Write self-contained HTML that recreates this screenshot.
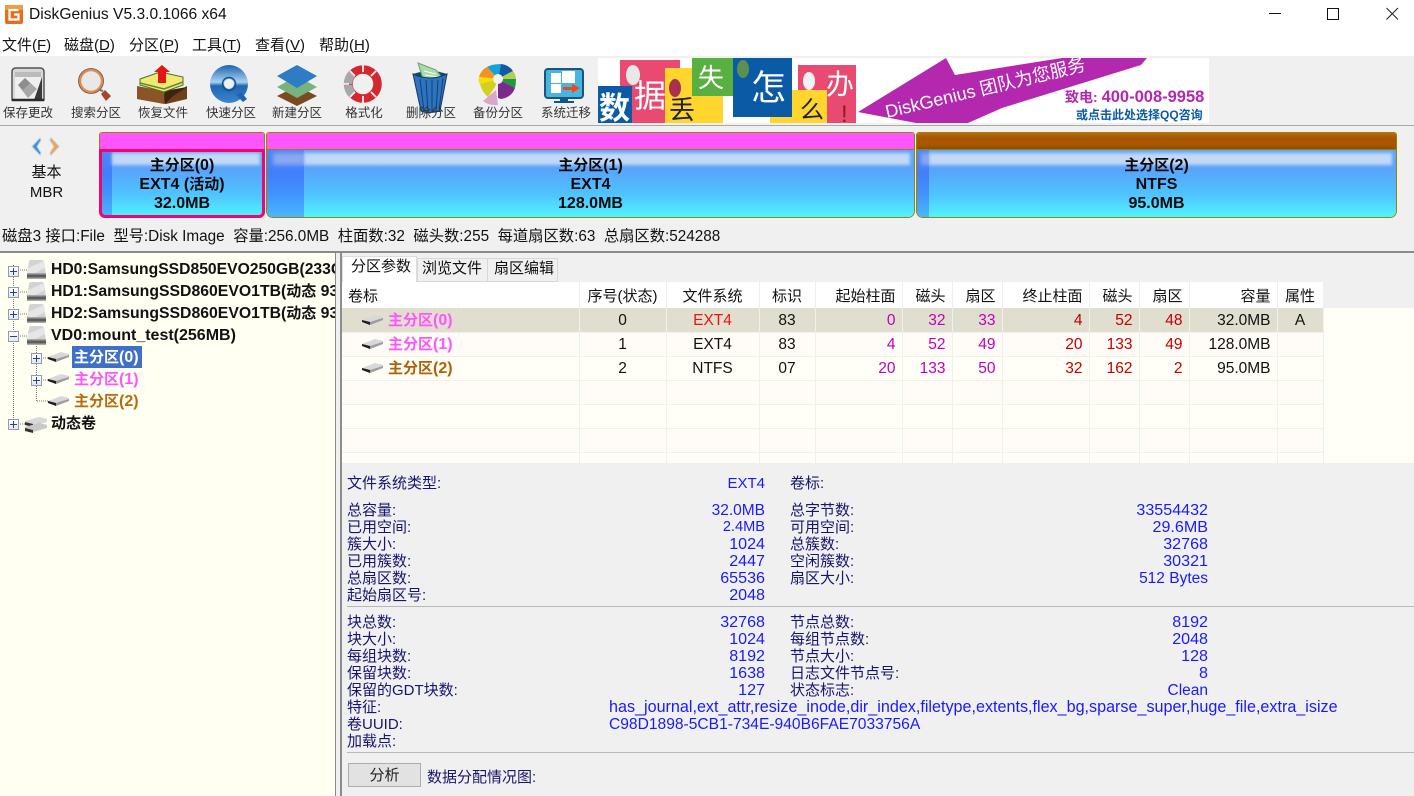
<!DOCTYPE html>
<html lang="zh-CN"><head><meta charset="utf-8"><title>DiskGenius</title>
<style>
html,body{margin:0;padding:0}
body{width:1414px;height:796px;overflow:hidden;position:relative;background:#f0f0f0;font:15px/17px "Liberation Sans","Noto Sans CJK SC",sans-serif;color:#111}
.a,.t,.l,.v,.b{position:absolute}
.t,.l,.v,.b{white-space:nowrap}
svg{position:absolute;overflow:visible}
.z{font-size:15px}
.m{top:37px;font-size:15px}
.m u{text-decoration:underline}
.b{top:105px;width:80px;text-align:center;font-size:12.5px;line-height:16px;color:#333}
.p{position:absolute;top:132px;height:86px;box-sizing:border-box;border:1px solid #9c8200;border-radius:3px 3px 7px 7px;overflow:hidden}
.p .top{position:absolute;left:0;right:0;top:0;height:17px;border-bottom:1px solid #9c8200;box-sizing:border-box}
.p .body{position:absolute;left:0;right:0;top:17px;bottom:0;background:linear-gradient(#5da5fb 0,#58a5fb 30%,#4fc2ff 65%,#50f3ff 100%)}
.p .strip{position:absolute;left:0;top:0;bottom:0;background:linear-gradient(#4d86f8 0,#417ffb 35%,#4192fd 65%,#47b7ff 100%)}
.p .band{position:absolute;right:4px;top:3px;height:12px;background:#c3d8f6;filter:blur(1.5px)}
.p .sband{position:absolute;top:3px;height:12px;background:#8aa8ee;filter:blur(2px)}
.p .txt{position:absolute;left:0;right:0;top:23px;text-align:center;font-weight:bold;font-size:16px;line-height:19px;color:#0a0a0a}
.tree{font-weight:bold;font-size:16px;left:51px}
.box{position:absolute;width:9px;height:9px;border:1px solid #8f9bb0;background:linear-gradient(#fff,#e4e6ee)}
.box:before{content:"";position:absolute;left:1px;right:1px;top:4px;height:1px;background:#26437f}
.box.plus:after{content:"";position:absolute;top:1px;bottom:1px;left:4px;width:1px;background:#26437f}
table{position:absolute;left:342px;top:282px;border-collapse:collapse;table-layout:fixed;width:981px;font-size:15.5px}
td{height:23px;padding:1px 6px 0 0;box-sizing:border-box;height:24px;border-right:1px solid #f1f0ea;border-bottom:1px solid #f1f0ea;text-align:right;white-space:nowrap;overflow:hidden;line-height:17px}
td.ct{text-align:center;padding:1px 0 0}
tr.h td{height:26px;background:#fff;border-right:1px solid #eee;border-bottom:0;font-size:15px;padding-top:2px}
tr.s td{background:#e0decf}
tr.x td{background:#fffcf7}
tr.y td{background:#fffff7}
tr.e td{height:11px}
.g{color:#c000b8}.r{color:#c20000}
td.pn{font-weight:bold;padding-left:46px;text-align:left;font-size:16px}
.l{left:347px;color:#16166e}
.l2{left:790px}
.v{color:#1a1aff;text-align:right;width:200px;left:565px;font-size:16.1px}
.v2{left:1008px}
.q{font-size:15.5px}
.ln{position:absolute;height:1px;background:#b8b8b8}
</style></head><body>
<svg width="0" height="0"><defs>
<g id="disk"><path d="M0 19V15L2 2Q2.500 0 4 0H15Q16.500 0 17 2L19 15V19Z" fill="#d3d3d3"/><path d="M1 8L17 1L18 8L8 13L1 13Z" fill="#e6e6e6"/><rect x="0" y="13" width="19" height="5.500" fill="#5c5c5c"/><rect x="0" y="13" width="19" height="1.500" fill="#a6a6a6"/><rect x="0" y="17.500" width="19" height="1.500" fill="#aaa"/></g>
<g id="part"><path d="M0 5L13 0L21 2V5L8 9Z" fill="#d8d8d8"/><path d="M0 5L8 7V10L0 7Z" fill="#1d1d1d"/><path d="M8 7L21 3V5L8 10Z" fill="#9d9d9d"/></g>
<linearGradient id="dg" x1="0" y1="0" x2="0" y2="1"><stop offset="0" stop-color="#1d62b0"/><stop offset=".45" stop-color="#a9d2ef"/><stop offset=".55" stop-color="#1f66b4"/><stop offset="1" stop-color="#3b86cc"/></linearGradient>
</defs></svg>

<div class="a" style="left:0;top:0;width:1414px;height:56px;background:#fff"></div>
<svg style="left:5px;top:5px" width="18" height="19" viewBox="0 0 18 19"><rect width="18" height="19" rx="2" fill="#e96d1f"/><rect y="0" width="18" height="5" fill="#f39a45"/><path d="M13.500 5H4.500V14.500H13.500V9.500H9" fill="none" stroke="#fff" stroke-width="2.200"/></svg>
<div class="t" style="left:29px;top:6px;font-size:15.6px;line-height:18px;color:#111">DiskGenius V5.3.0.1066 x64</div>
<svg style="left:1230px;top:0" width="184" height="32"><path d="M39 13.500H51" stroke="#111" fill="none"/><rect x="97.500" y="8.500" width="11" height="11" fill="none" stroke="#111"/><path d="M156.500 8L168 19.500M168 8L156.500 19.500" stroke="#222" fill="none"/></svg>
<div class="t m" style="left:2px">文件(<u>F</u>)</div>
<div class="t m" style="left:64px">磁盘(<u>D</u>)</div>
<div class="t m" style="left:129px">分区(<u>P</u>)</div>
<div class="t m" style="left:192px">工具(<u>T</u>)</div>
<div class="t m" style="left:255px">查看(<u>V</u>)</div>
<div class="t m" style="left:319px">帮助(<u>H</u>)</div>

<!-- toolbar icons -->
<svg style="left:11px;top:67px" width="34" height="35" viewBox="0 0 34 35"><path d="M1 33V5Q1 1 5 1H29Q33 1 33 5V33Z" fill="#d8d8d8" stroke="#555" stroke-width="1.500"/><rect x="4" y="5" width="26" height="27" fill="#efefef"/><rect x="4" y="5" width="26" height="5" fill="#bbb"/><path d="M31 10V33H23Z" fill="#3a3a3a"/><path d="M7 18L14 11L26 22L17 31Z" fill="#a8a8a8"/><path d="M7 18L14 11L19 16L12 23Z" fill="#8d8d8d"/><path d="M1 33H33" stroke="#2b2b2b" stroke-width="2.500"/></svg>
<svg style="left:78px;top:67px" width="34" height="36" viewBox="0 0 34 36"><circle cx="13" cy="14" r="11" fill="#e8e8e8" stroke="#e58a4e" stroke-width="2.500"/><circle cx="13" cy="14" r="12.500" fill="none" stroke="#555" stroke-width=".8"/><path d="M22 23L25 24" stroke="#777" stroke-width="2"/><path d="M23 27L27 23L33 29L28 34Z" fill="#a8432c"/></svg>
<svg style="left:137px;top:64px" width="50" height="42" viewBox="0 0 50 42"><path d="M0 22L14 30L36 30L50 22V35L29 40L0 35Z" fill="#6d3f1a"/><path d="M0 22V35L27 40V27Z" fill="#8a5526"/><path d="M27 27L50 23L36 32L28 40Z" fill="#3d2410"/><path d="M3 15L23 8L46 13V21L27 28L3 21Z" fill="#f0ea71" stroke="#4a6f2b"/><path d="M3 19L27 25L46 18" fill="none" stroke="#5b8a3a" stroke-width="1.500"/><path d="M21 19V8H17L25 1L33 8H29V19Z" fill="#e21818"/></svg>
<svg style="left:210px;top:65px" width="40" height="40" viewBox="0 0 40 40"><circle cx="19" cy="19" r="19" fill="url(#dg)"/><circle cx="19" cy="19" r="5" fill="#f0f0f0"/><circle cx="19" cy="19" r="6.500" fill="none" stroke="#14508f" stroke-width="1.500"/><path d="M26 30L33 37L37 34L31 27Z" fill="#1e64ae"/></svg>
<svg style="left:276px;top:64px" width="42" height="44" viewBox="0 0 42 44"><path d="M21 22L41 32L21 42L1 32Z" fill="#7a4a21"/><path d="M21 12L41 23L21 34L1 23Z" fill="#78b27c"/><path d="M21 1L41 12L21 24L1 12Z" fill="#2e7cc4"/></svg>
<svg style="left:344px;top:65px" width="38" height="38" viewBox="0 0 38 38"><circle cx="19" cy="19" r="14.500" fill="none" stroke="#d3282e" stroke-width="8.500"/><path d="M4 19A15 15 0 0 1 8 9M4 20A15 15 0 0 0 8 29" fill="none" stroke="#a8a8a8" stroke-width="8.500"/><path d="M19 0V7M19 31V38M6 6L11 11M32 6L27 11M6 32L11 27M32 32L27 27M0 19H5" stroke="#f0f0f0" stroke-width="1.800"/></svg>
<svg style="left:412px;top:62px" width="36" height="52" viewBox="0 0 36 52"><path d="M1 12Q18 20 35 12Q18 6 1 12Z" fill="#17456f"/><path d="M6 1L24 8L32 18L11 17Z" fill="#a7dba7" stroke="#6ea06e"/><path d="M12 9L24 12M13 13L27 15" stroke="#fff"/><path d="M1 12Q18 20 35 12L28 49Q18 52 9 49Z" fill="#2d74c0" stroke="#14395f"/><path d="M8 17L12 49M14 18L16 50M20 18L20 50M26 18L24 50M31 16L27 49" stroke="#143f72"/></svg>
<svg style="left:477px;top:64px" width="42" height="42" viewBox="0 0 42 42"><path d="M21 15L10 3Q15 0 24 0Z" fill="#12a3df"/><path d="M21 15L24 0Q32 1 36 7Z" fill="#0f5aa5"/><path d="M21 15L36 7Q39 11 39 15Z" fill="#b5cc57"/><path d="M21 15L39 15Q39 20 38 24Z" fill="#1a9c3e"/><path d="M21 15L38 24Q35 33 24 35L21 34Z" fill="#7b2a8c"/><path d="M21 15L10 3Q4 6 2 13Z" fill="#f2931f"/><path d="M21 15L2 13Q1 18 3 20Z" fill="#f4e100"/><path d="M21 15L3 20Q5 28 11 33L18 23Z" fill="#d7cf1f"/><path d="M19 26L21 41Q12 42 6 37Z" fill="#d7a8c8"/><circle cx="21" cy="15" r="5" fill="#f0f0f0"/></svg>
<svg style="left:544px;top:68px" width="40" height="37" viewBox="0 0 40 37"><rect x="1" y="1" width="38" height="29" rx="3" fill="#4ab4de" stroke="#14567f" stroke-width="2"/><path d="M7 5H17V15H7ZM18 3H31V15H18ZM7 16H17V25H7Z" fill="#fff"/><path d="M19 19H28V16L36 20L28 25V22H19Z" fill="#e8491d"/><path d="M16 30H24V33H30V35H10V33H16Z" fill="#14567f"/></svg>
<div class="b" style="left:-12px">保存更改</div>
<div class="b" style="left:56px">搜索分区</div>
<div class="b" style="left:123px">恢复文件</div>
<div class="b" style="left:191px">快速分区</div>
<div class="b" style="left:257px">新建分区</div>
<div class="b" style="left:324px">格式化</div>
<div class="b" style="left:391px">删除分区</div>
<div class="b" style="left:458px">备份分区</div>
<div class="b" style="left:526px">系统迁移</div>

<!-- banner -->
<div class="a" style="left:598px;top:58px;width:611px;height:65px;background:#fff;overflow:hidden">
<svg style="left:0;top:0" width="611" height="65" viewBox="598 58 611 65" font-family="Liberation Sans,Noto Sans CJK SC,sans-serif">
<rect x="620" y="60" width="60" height="63" fill="#e84a72"/>
<rect x="665" y="68" width="58" height="55" fill="#ffd52e"/>
<rect x="692" y="58" width="41" height="38" fill="#58b040"/>
<rect x="798" y="65" width="58" height="58" fill="#e84a72"/>
<rect x="770" y="90" width="57" height="33" fill="#ffd52e"/>
<rect x="733" y="58" width="59" height="59" fill="#0a5aa5"/>
<rect x="598" y="86" width="34" height="37" fill="#0a5aa5"/>
<ellipse cx="633" cy="75" rx="7" ry="10" fill="#e8e8e8"/><ellipse cx="675" cy="88" rx="6" ry="9" fill="#a83050"/><ellipse cx="743" cy="69" rx="6" ry="9" fill="#5d8f50"/><ellipse cx="809" cy="81" rx="6" ry="9" fill="#f2f2f2"/>
<text x="599" y="119" font-size="31" font-weight="bold" fill="#fff">数</text>
<text x="634" y="107" font-size="32" fill="#fff">据</text>
<text x="669" y="119" font-size="26" fill="#222">丢</text>
<text x="698" y="87" font-size="26" fill="#fff">失</text>
<text x="751" y="100" font-size="35" fill="#fff">怎</text>
<text x="800" y="118" font-size="24" fill="#222">么</text>
<text x="826" y="94" font-size="28" fill="#fff">办</text>
<text x="841" y="122" font-size="24" fill="#8a1f20">!</text>
<path d="M858 112L946 58L955 75L1062 58H1147L1141 65L1002 108L968 123H916Z" fill="#b428b0"/>
<text x="887" y="118" font-size="18" fill="#fff" transform="rotate(-13.500 887 118)">DiskGenius 团队为您服务</text>
<text x="1065" y="102" font-size="14" font-weight="bold" fill="#b428b0">致电: <tspan font-size="16.500">400-008-9958</tspan></text>
<text x="1076" y="119" font-size="12" font-weight="bold" fill="#0a5aa5">或点击此处选择QQ咨询</text>
</svg></div>
<div class="a" style="left:0;top:125px;width:1414px;height:1px;background:#a8a8a8"></div>

<!-- disk bar -->
<svg style="left:30px;top:137px" width="33" height="20" viewBox="0 0 33 20"><path d="M10 1L2 9.500L10 18L11 16L7 9.500L11 3Z" fill="#2a96ee" stroke="#c8c8c8"/><path d="M21 1L29 9.500L21 18L20 16L24 9.500L20 3Z" fill="#f4a244" stroke="#c8c8c8"/></svg>
<div class="t" style="left:0;top:164px;width:93px;text-align:center">基本</div>
<div class="t" style="left:0;top:184px;width:93px;text-align:center">MBR</div>

<div class="p" style="left:99px;width:166px"><div class="top" style="background:#ff55ff"></div><div class="body"><div class="strip" style="width:12px"></div><div class="band" style="left:12px"></div></div><div class="txt"><span class="z">主分区</span>(0)<br>EXT4 (<span class="z">活动</span>)<br>32.0MB</div></div>
<div class="a" style="left:99px;top:149px;width:166px;height:69px;box-sizing:border-box;border:3px solid #f0066e;border-radius:1px 1px 6px 6px"></div>
<div class="p" style="left:266px;width:649px"><div class="top" style="background:#ff55ff"></div><div class="body"><div class="strip" style="width:37px"></div><div class="sband" style="left:6px;width:31px"></div><div class="band" style="left:37px"></div></div><div class="txt"><span class="z">主分区</span>(1)<br>EXT4<br>128.0MB</div></div>
<div class="p" style="left:916px;width:481px"><div class="top" style="background:linear-gradient(#b96a16,#a85600 30%,#a85600 75%,#8a4a06)"></div><div class="body"><div class="strip" style="width:12px"></div><div class="sband" style="left:4px;width:8px"></div><div class="band" style="left:12px"></div></div><div class="txt"><span class="z">主分区</span>(2)<br>NTFS<br>95.0MB</div></div>

<div class="t" style="left:2px;top:228px;font-size:15.3px">磁盘3 接口:File&nbsp; 型号:Disk Image&nbsp; 容量:256.0MB&nbsp; 柱面数:32&nbsp; 磁头数:255&nbsp; 每道扇区数:63&nbsp; 总扇区数:524288</div>
<div class="a" style="left:0;top:251px;width:1414px;height:2px;background:#8a8a8a"></div>

<!-- tree -->
<div class="a" style="left:0;top:253px;width:335px;height:543px;background:#fffff2;overflow:hidden">
<svg style="left:0;top:0" width="336" height="543"><path d="M13.500 12V170M36.500 85V148M18 17H27M18 39H27M18 61H27M18 83H27M18 171H26M41 105H48M41 127H48M37 148H48" stroke="#777" stroke-dasharray="1 1" fill="none"/></svg>
<i class="box plus" style="left:8px;top:13px"></i><i class="box plus" style="left:8px;top:34px"></i><i class="box plus" style="left:8px;top:56px"></i><i class="box" style="left:8px;top:78px"></i><i class="box plus" style="left:31px;top:100px"></i><i class="box plus" style="left:31px;top:122px"></i><i class="box plus" style="left:8px;top:166px"></i>
<svg style="left:27px;top:7px" width="19" height="19"><use href="#disk"/></svg><svg style="left:27px;top:29px" width="19" height="19"><use href="#disk"/></svg><svg style="left:27px;top:51px" width="19" height="19"><use href="#disk"/></svg><svg style="left:27px;top:73px" width="19" height="19"><use href="#disk"/></svg>
<svg style="left:48px;top:99px" width="21" height="10"><use href="#part"/></svg><svg style="left:48px;top:121px" width="21" height="10"><use href="#part"/></svg><svg style="left:48px;top:143px" width="21" height="10"><use href="#part"/></svg>
<svg style="left:25px;top:164px" width="22" height="16" viewBox="0 0 22 16"><path d="M0 4L14 0L22 2V5L8 9L0 7Z" fill="#d8d8d8"/><path d="M0 5L8 7V10L0 8Z" fill="#333"/><path d="M0 10L14 6L22 8V11L8 15L0 13Z" fill="#c8c8c8"/><path d="M0 11L8 13V16L0 14Z" fill="#333"/></svg>
<div class="t tree" style="top:8px;font-size:15.7px">HD0:SamsungSSD850EVO250GB(233GB)</div>
<div class="t tree" style="top:30px;font-size:15.8px">HD1:SamsungSSD860EVO1TB(<span class="z">动态</span> 932GB)</div>
<div class="t tree" style="top:52px;font-size:15.8px">HD2:SamsungSSD860EVO1TB(<span class="z">动态</span> 932GB)</div>
<div class="t tree" style="top:74px">VD0:mount_test(256MB)</div>
<div class="a" style="left:72px;top:93px;width:70px;height:22px;background:#3f6fc7"></div>
<div class="t tree" style="left:74px;top:96px;color:#fff"><span class="z">主分区</span>(0)</div>
<div class="t tree" style="left:74px;top:118px;color:#ff55ff"><span class="z">主分区</span>(1)</div>
<div class="t tree" style="left:74px;top:140px;color:#b86a10"><span class="z">主分区</span>(2)</div>
<div class="t tree" style="top:162px"><span class="z">动态卷</span></div>
</div>
<div class="a" style="left:335px;top:253px;width:1px;height:543px;background:#8a8a8a"></div>
<div class="a" style="left:340px;top:253px;width:2px;height:543px;background:#8d8d8d"></div>

<!-- tabs -->
<div class="a" style="left:342px;top:256px;width:75px;height:26px;background:#fff;border:1px solid #ddd;border-bottom:0;box-sizing:border-box"></div>
<div class="a" style="left:417px;top:258px;width:71px;height:24px;background:#f0f0f0;border:1px solid #d8d8d8;box-sizing:border-box"></div>
<div class="a" style="left:487px;top:258px;width:71px;height:24px;background:#f0f0f0;border:1px solid #d8d8d8;box-sizing:border-box"></div>
<div class="t" style="left:351px;top:258px">分区参数</div>
<div class="t" style="left:422px;top:260px">浏览文件</div>
<div class="t" style="left:494px;top:260px">扇区编辑</div>

<!-- table -->
<div class="a" style="left:342px;top:308px;width:1072px;height:155px;background:#fffff7"></div>
<table>
<colgroup><col style="width:237px"><col style="width:87px"><col style="width:93px"><col style="width:56px"><col style="width:87px"><col style="width:50px"><col style="width:50px"><col style="width:87px"><col style="width:50px"><col style="width:50px"><col style="width:88px"><col style="width:46px"></colgroup>
<tr class="h"><td style="text-align:left;padding-left:6px">卷标</td><td class="ct">序号(状态)</td><td class="ct">文件系统</td><td class="ct">标识</td><td>起始柱面</td><td>磁头</td><td>扇区</td><td>终止柱面</td><td>磁头</td><td>扇区</td><td>容量</td><td class="ct">属性</td></tr>
<tr class="s"><td class="pn" style="color:#ff55ff"><span class="z">主分区</span>(0)</td><td class="ct">0</td><td class="ct" style="color:#f01010">EXT4</td><td class="ct">83</td><td class="g">0</td><td class="g">32</td><td class="g">33</td><td class="r">4</td><td class="r">52</td><td class="r">48</td><td>32.0MB</td><td class="ct">A</td></tr>
<tr class="x"><td class="pn" style="color:#ff55ff"><span class="z">主分区</span>(1)</td><td class="ct">1</td><td class="ct">EXT4</td><td class="ct">83</td><td class="g">4</td><td class="g">52</td><td class="g">49</td><td class="r">20</td><td class="r">133</td><td class="r">49</td><td>128.0MB</td><td></td></tr>
<tr class="y"><td class="pn" style="color:#b06008"><span class="z">主分区</span>(2)</td><td class="ct">2</td><td class="ct">NTFS</td><td class="ct">07</td><td class="g">20</td><td class="g">133</td><td class="g">50</td><td class="r">32</td><td class="r">162</td><td class="r">2</td><td>95.0MB</td><td></td></tr>
<tr class="x"><td></td><td></td><td></td><td></td><td></td><td></td><td></td><td></td><td></td><td></td><td></td><td></td></tr>
<tr class="y"><td></td><td></td><td></td><td></td><td></td><td></td><td></td><td></td><td></td><td></td><td></td><td></td></tr>
<tr class="x"><td></td><td></td><td></td><td></td><td></td><td></td><td></td><td></td><td></td><td></td><td></td><td></td></tr>
<tr class="y e"><td></td><td></td><td></td><td></td><td></td><td></td><td></td><td></td><td></td><td></td><td></td><td></td></tr>
</table>
<svg style="left:362px;top:315px" width="21" height="10"><use href="#part"/></svg><svg style="left:362px;top:339px" width="21" height="10"><use href="#part"/></svg><svg style="left:362px;top:363px" width="21" height="10"><use href="#part"/></svg>
<div class="a" style="left:342px;top:463px;width:1072px;height:333px;background:#f0f0f0"></div>

<!-- details -->
<div class="t l" style="top:475px">文件系统类型:</div><div class="v" style="top:475px;font-size:15px">EXT4</div><div class="t l l2" style="top:475px">卷标:</div>
<div class="t l" style="top:502px">总容量:</div><div class="v q" style="top:502px">32.0MB</div><div class="t l l2" style="top:502px">总字节数:</div><div class="v v2" style="top:502px">33554432</div>
<div class="t l" style="top:519px">已用空间:</div><div class="v" style="top:519px;font-size:14.6px">2.4MB</div><div class="t l l2" style="top:519px">可用空间:</div><div class="v v2" style="top:519px">29.6MB</div>
<div class="t l" style="top:536px">簇大小:</div><div class="v" style="top:536px">1024</div><div class="t l l2" style="top:536px">总簇数:</div><div class="v v2" style="top:536px">32768</div>
<div class="t l" style="top:553px">已用簇数:</div><div class="v" style="top:553px">2447</div><div class="t l l2" style="top:553px">空闲簇数:</div><div class="v v2" style="top:553px">30321</div>
<div class="t l" style="top:570px">总扇区数:</div><div class="v" style="top:570px">65536</div><div class="t l l2" style="top:570px">扇区大小:</div><div class="v v2 q" style="top:570px">512 Bytes</div>
<div class="t l" style="top:587px">起始扇区号:</div><div class="v" style="top:587px">2048</div>
<div class="ln" style="left:347px;top:606px;width:1067px"></div>
<div class="t l" style="top:614px">块总数:</div><div class="v" style="top:614px">32768</div><div class="t l l2" style="top:614px">节点总数:</div><div class="v v2" style="top:614px">8192</div>
<div class="t l" style="top:631px">块大小:</div><div class="v" style="top:631px">1024</div><div class="t l l2" style="top:631px">每组节点数:</div><div class="v v2" style="top:631px">2048</div>
<div class="t l" style="top:648px">每组块数:</div><div class="v" style="top:648px">8192</div><div class="t l l2" style="top:648px">节点大小:</div><div class="v v2" style="top:648px">128</div>
<div class="t l" style="top:665px">保留块数:</div><div class="v" style="top:665px">1638</div><div class="t l l2" style="top:665px">日志文件节点号:</div><div class="v v2" style="top:665px">8</div>
<div class="t l" style="top:682px">保留的GDT块数:</div><div class="v" style="top:682px">127</div><div class="t l l2" style="top:682px">状态标志:</div><div class="v v2 q" style="top:682px">Clean</div>
<div class="t l" style="top:699px">特征:</div><div class="t" style="left:609px;top:699px;color:#1a1aff;font-size:16.15px">has_journal,ext_attr,resize_inode,dir_index,filetype,extents,flex_bg,sparse_super,huge_file,extra_isize</div>
<div class="t l" style="top:716px">卷UUID:</div><div class="t" style="left:609px;top:716px;color:#1a1aff;font-size:15.6px">C98D1898-5CB1-734E-940B6FAE7033756A</div>
<div class="t l" style="top:733px">加载点:</div>
<div class="ln" style="left:347px;top:752px;width:1067px"></div>
<div class="a" style="left:348px;top:763px;width:73px;height:24px;box-sizing:border-box;background:#e2e2e2;border:1px solid #adadad;text-align:center;line-height:24px;color:#222">分析</div>
<div class="t l" style="left:427px;top:769px">数据分配情况图:</div>
</body></html>
